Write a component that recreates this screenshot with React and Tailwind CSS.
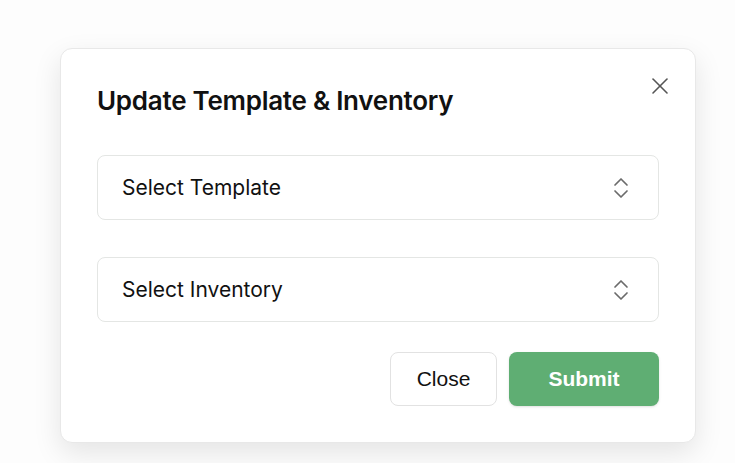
import React from "react";

const UpDown = () => (
  <svg width="16" height="22" viewBox="0 0 16 22" fill="none" stroke="#6b6b6b" strokeWidth="1.7" strokeLinecap="round" strokeLinejoin="round">
    <polyline points="2,8 8,2 14,8" />
    <polyline points="2,14 8,20 14,14" />
  </svg>
);

const SelectBox = ({ label }) => (
  <button className="flex h-[65px] w-full items-center justify-between rounded-lg border border-[#e4e6e4] bg-white pl-[24px] pr-[29px] text-left">
    <span className="text-[21px] text-[#111] [font-family:Inter,sans-serif]">{label}</span>
    <UpDown />
  </button>
);

export default function App() {
  return (
    <div className="min-h-screen bg-[#fdfdfd] pl-[60px] pt-[48px]">
      <div className="relative flex h-[395px] w-[636px] flex-col rounded-xl border border-[#e8e8e8] bg-white px-[36px] pt-[36px] shadow-[0_10px_28px_rgba(0,0,0,0.10)]">
        <button className="absolute right-[26px] top-[28px] text-[#555]">
          <svg width="18" height="18" viewBox="0 0 18 18" fill="none" stroke="#555" strokeWidth="1.6" strokeLinecap="round">
            <line x1="2" y1="2" x2="16" y2="16" />
            <line x1="16" y1="2" x2="2" y2="16" />
          </svg>
        </button>
        <h2 className="text-[26px] font-semibold leading-[32px] tracking-[-0.01em] text-[#111] [font-family:Inter,sans-serif]">
          Update Template &amp; Inventory
        </h2>
        <div className="mt-[38px] flex flex-col gap-[37px]">
          <SelectBox label="Select Template" />
          <SelectBox label="Select Inventory" />
        </div>
        <div className="mt-[30px] flex justify-end gap-[12px]">
          <button className="h-[54px] w-[107px] rounded-lg border border-[#e2e2e2] bg-white text-[21px] text-[#111] [font-family:'Liberation_Sans',Arial,sans-serif]">
            Close
          </button>
          <button className="h-[54px] w-[150px] rounded-lg bg-[#5fae73] text-[21px] font-bold text-white shadow-sm [font-family:'Liberation_Sans',Arial,sans-serif]">
            Submit
          </button>
        </div>
      </div>
    </div>
  );
}
